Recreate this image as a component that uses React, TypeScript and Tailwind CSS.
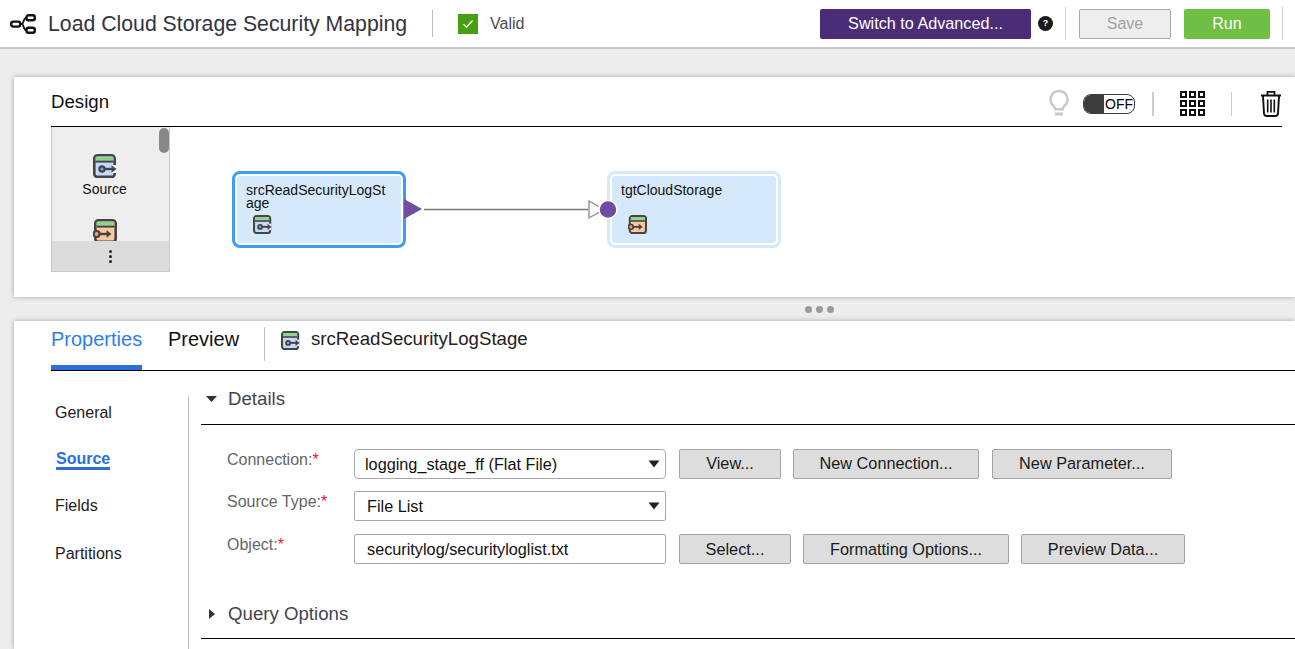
import React from "react";

function StageIcon({ kind, size = 24 }: { kind: "source" | "target"; size?: number }) {
  const body = kind === "source" ? "#c6daf8" : "#fcc6a3";
  return (
    <svg width={size} height={size} viewBox="0 0 24 24" className="block shrink-0">
      {kind === "source" ? (
        <g>
          <rect x="1.3" y="1.3" width="20.4" height="21.6" rx="3.2" fill={body} stroke="#444" strokeWidth="2.6" />
          <rect x="2.6" y="2.6" width="17.8" height="4" fill="#8ed48e" />
          <rect x="2.6" y="6.6" width="17.8" height="2" fill="#444" />
          <path d="M19 11v8h4v-8z" fill="#eef3fb" />
          <circle cx="9" cy="15" r="2.6" fill="#7fa6e8" stroke="#444" strokeWidth="2.2" />
          <path d="M11.5 15H20" stroke="#444" strokeWidth="2.4" />
          <path d="M18.5 11.2l5 3.8-5 3.8z" fill="#444" />
        </g>
      ) : (
        <g>
          <rect x="2.3" y="1.3" width="20.4" height="21.6" rx="3.2" fill={body} stroke="#444" strokeWidth="2.6" />
          <rect x="3.6" y="2.6" width="17.8" height="4" fill="#8ed48e" />
          <rect x="3.6" y="6.6" width="17.8" height="2" fill="#444" />
          <circle cx="3.6" cy="15" r="3" fill="#f3a468" stroke="#444" strokeWidth="2.2" />
          <path d="M6.5 15H15" stroke="#444" strokeWidth="2.4" />
          <path d="M13.5 11.2l5 3.8-5 3.8z" fill="#444" />
        </g>
      )}
    </svg>
  );
}

function FormButton({ w, top, children }: { w: string; top?: boolean; children: React.ReactNode }) {
  return (
    <button
      className={`h-[30px] ${w} ${top ? "pb-[2px]" : "pb-0"} rounded-[2px] border border-[#a3a3a3] bg-[#dddddd] text-[16.3px] text-[#1a1a1a]`}
    >
      {children}
    </button>
  );
}

function Required({ children }: { children: React.ReactNode }) {
  return (
    <div className="w-[127px] text-[16px] leading-[18px] text-[#666666]">
      {children}
      <span className="text-[#e8202a]">*</span>
    </div>
  );
}

function Caret() {
  return (
    <svg width="12" height="8" viewBox="0 0 12 8" className="block">
      <path d="M0.5 0.5H11.5L6 7.5z" fill="#222" />
    </svg>
  );
}

export default function App() {
  return (
    <div className="h-[649px] w-[1295px] overflow-hidden bg-[#ededed] font-['Liberation_Sans',Arial,sans-serif]">
      <header className="flex h-[49px] items-center border-b-2 border-[#c6c6c6] bg-white">
        <svg width="26" height="20" viewBox="0 0 26 20" className="ml-[10px] block">
          <rect x="1.2" y="7.6" width="9" height="5" rx="2" fill="none" stroke="#111" strokeWidth="2.4" />
          <rect x="16.5" y="1.2" width="8.3" height="5" rx="2" fill="none" stroke="#111" strokeWidth="2.4" />
          <rect x="16.5" y="13.8" width="8.3" height="5" rx="2" fill="none" stroke="#111" strokeWidth="2.4" />
          <path d="M10.5 10h1.5c1.5 0 1.5-6.3 4.5-6.3M12 10c1.5 0 1.5 6.3 4.5 6.3" fill="none" stroke="#111" strokeWidth="1.8" />
        </svg>
        <h1 className="ml-[12px] mt-[2px] w-[384px] whitespace-nowrap text-[21.25px] font-normal text-[#33333f]">
          Load Cloud Storage Security Mapping
        </h1>
        <div className="h-[27px] w-px bg-[#bdbdbd]" />
        <div className="ml-[25px] flex h-[20px] w-[20px] items-center justify-center bg-[#44a012]">
          <svg width="12" height="10" viewBox="0 0 12 10">
            <path d="M1.5 5.2l3 3L10.5 1.5" fill="none" stroke="#fff" strokeWidth="1.4" />
          </svg>
        </div>
        <span className="ml-[12px] w-[330px] text-[16px] text-[#4a4a55]">Valid</span>
        <button className="h-[30px] w-[211px] rounded-[2px] bg-[#4b2d77] text-[16.2px] text-white">
          Switch to Advanced...
        </button>
        <div className="ml-[7px] flex h-[15px] w-[15px] items-center justify-center rounded-full bg-[#1a1a1a] text-[9px] font-bold text-white">
          ?
        </div>
        <div className="ml-[12px] h-[33px] w-px bg-[#cfcfcf]" />
        <button className="ml-[13px] h-[30px] w-[92px] rounded-[2px] border border-[#a8a8a8] bg-[#eeeeee] text-[16px] text-[#a3a3a3]">
          Save
        </button>
        <button className="ml-[13px] h-[30px] w-[86px] rounded-[2px] bg-[#6fbf44] text-[16px] text-white">Run</button>
        <div className="ml-[12px] h-[33px] w-px bg-[#cfcfcf]" />
      </header>

      <section className="ml-[14px] mt-[28px] h-[220px] bg-white pl-[37px] pr-[13px] shadow-[0_0_5px_rgba(0,0,0,0.3)]">
        <div className="flex h-[50px] items-center border-b border-black pt-[4px]">
          <h2 className="mt-[-3px] flex-1 text-[18.67px] font-normal text-[#111111]">Design</h2>
          <svg width="22" height="28" viewBox="0 0 22 28" className="mt-[-2px] block">
            <path d="M11 2a8.5 8.5 0 0 0-5 15.3c.8.8 1.2 1.7 1.2 3h7.6c0-1.3.4-2.2 1.2-3A8.5 8.5 0 0 0 11 2z" fill="none" stroke="#c9c9c9" strokeWidth="2.4" />
            <path d="M7 25h8" stroke="#c9c9c9" strokeWidth="3" />
          </svg>
          <div className="ml-[13px] flex h-[20px] w-[52px] items-stretch overflow-hidden rounded-[8px] border border-[#3c3c3c]">
            <div className="w-[20px] bg-[#3c3c3c]" />
            <div className="flex-1 pl-[1px] text-[14px] leading-[18px] text-black">OFF</div>
          </div>
          <div className="ml-[17px] h-[24px] w-[2px] bg-[#cccccc]" />
          <div className="ml-[26px] grid w-[25px] grid-cols-3 gap-[2px]">
            {[0, 1, 2, 3, 4, 5, 6, 7, 8].map((i) => (
              <div key={i} className="h-[7px] w-[7px] border-2 border-[#111111]" />
            ))}
          </div>
          <div className="ml-[26px] h-[24px] w-px bg-[#cccccc]" />
          <svg width="22" height="27" viewBox="0 0 22 27" className="ml-[28px] block">
            <path d="M1 5.5h20M7.5 5V1.8h7V5" fill="none" stroke="#111" strokeWidth="1.8" />
            <path d="M3 6l1 17.5A2.5 2.5 0 0 0 6.5 26h9a2.5 2.5 0 0 0 2.5-2.5L19 6" fill="none" stroke="#111" strokeWidth="1.9" />
            <path d="M7.7 9.5v13M11 9.5v13M14.3 9.5v13" stroke="#111" strokeWidth="1.6" />
          </svg>
        </div>
        <div className="flex">
          <aside className="relative h-[145px] w-[119px] overflow-hidden border border-t-0 border-[#c8c8c8] bg-[#eeeeee]">
            <div className="absolute right-[0px] top-[1px] h-[25px] w-[10px] rounded-[5px] bg-[#888888]" />
            <div className="flex h-[114px] flex-col items-center overflow-hidden pr-[12px] pt-[27px]">
              <StageIcon kind="source" />
              <span className="mt-[3px] text-[14px] leading-[16px] text-[#111111]">Source</span>
              <div className="mt-[22px]">
                <StageIcon kind="target" />
              </div>
            </div>
            <div className="flex h-[30px] flex-col items-center justify-center gap-[2px] bg-[#dcdcdc]">
              <div className="h-[3px] w-[3px] rounded-full bg-[#222222]" />
              <div className="h-[3px] w-[3px] rounded-full bg-[#222222]" />
              <div className="h-[3px] w-[3px] rounded-full bg-[#222222]" />
            </div>
          </aside>
          <div className="relative flex-1">
            {/* free canvas: nodes and connector */}
            <div className="absolute left-[62px] top-[44px] h-[77px] w-[174px] rounded-[8px] border-[3px] border-[#3d9df6] bg-white p-[2px]">
              <div className="h-full rounded-[3px] bg-[#d6e9fb] px-[9px] pt-[8px] text-[14px] leading-[13px] text-[#111111]">
                <div className="w-[140px] break-all">srcReadSecurityLogStage</div>
                <div className="ml-[7px] mt-[5px]">
                  <StageIcon kind="source" size={19} />
                </div>
              </div>
            </div>
            <div className="absolute left-[437px] top-[44px] h-[77px] w-[174px] rounded-[8px] border-[3px] border-[#d6e9fb] bg-white p-[2px]">
              <div className="h-full rounded-[3px] bg-[#d6e9fb] px-[9px] pt-[6px] text-[14px] leading-[16px] text-[#111111]">
                <div>tgtCloudStorage</div>
                <div className="ml-[7px] mt-[17px]">
                  <StageIcon kind="target" size={19} />
                </div>
              </div>
            </div>
            <svg width="220" height="26" viewBox="0 0 220 26" className="absolute left-[230px] top-[72px] block">
              <path d="M4 0L22 10 4 20z" fill="#6e4ea3" />
              <path d="M24 10.5H188" stroke="#777" strokeWidth="1.3" />
              <path d="M189 2L204 10.5 189 19z" fill="#fff" stroke="#888" strokeWidth="1.3" />
              <circle cx="208" cy="10.5" r="9" fill="#6e4ea3" stroke="#fff" strokeWidth="1.5" />
            </svg>
          </div>
        </div>
      </section>

      <div className="flex h-[24px] items-center gap-[4px] pl-[805px] pt-[1px]">
        <div className="h-[7px] w-[7px] rounded-full bg-[#9b9b9b]" />
        <div className="h-[7px] w-[7px] rounded-full bg-[#9b9b9b]" />
        <div className="h-[7px] w-[7px] rounded-full bg-[#9b9b9b]" />
      </div>

      <section className="ml-[14px] h-[328px] bg-white pl-[37px] shadow-[0_0_5px_rgba(0,0,0,0.3)]">
        <div className="flex h-[50px] border-b border-black">
          <div className="h-[49px] w-[91px] border-b-[5px] border-[#2a6fdb] pt-[6px] text-[20px] leading-[24px] text-[#2f7ee8]">
            Properties
          </div>
          <div className="ml-[26px] w-[96px] pt-[6px] text-[20px] leading-[24px] text-[#111111]">Preview</div>
          <div className="mt-[6px] h-[34px] w-px bg-[#bdbdbd]" />
          <div className="ml-[16px] mt-[10px]">
            <StageIcon kind="source" size={19} />
          </div>
          <div className="ml-[11px] pt-[7px] text-[18.67px] leading-[22px] text-[#222222]">srcReadSecurityLogStage</div>
        </div>
        <div className="flex">
          <nav className="mt-[25px] h-[253px] w-[138px] border-r border-[#bdbdbd] pl-[4px] text-[16px] text-[#222222]">
            <div className="mt-[8px] leading-[18px]">General</div>
            <div className="mt-[28px] leading-[18px]">
              <span className="ml-[1px] inline-block border-b-[3px] border-[#2a6fdb] font-bold leading-[16px] text-[#2a6fdb]">
                Source
              </span>
            </div>
            <div className="mt-[27px] leading-[18px]">Fields</div>
            <div className="mt-[30px] leading-[18px]">Partitions</div>
          </nav>
          <div className="ml-[12px] flex-1">
            <div className="flex h-[54px] items-center border-b border-black pt-[2px]">
              <svg width="11" height="6" viewBox="0 0 11 6" className="ml-[5px] block">
                <path d="M0 0H11L5.5 6z" fill="#333" />
              </svg>
              <span className="ml-[11px] text-[18.67px] text-[#44444e]">Details</span>
            </div>
            <div className="ml-[26px] mt-[24px] flex flex-col">
              <div className="flex items-start">
                <div className="mt-[2px]">
                  <Required>Connection:</Required>
                </div>
                <div className="flex h-[30px] w-[312px] items-center rounded-[4px] border border-[#a8a8a8] pl-[10px] pr-[5px] text-[16.25px] text-[#111111]">
                  <span className="flex-1">logging_stage_ff (Flat File)</span>
                  <Caret />
                </div>
                <div className="ml-[13px] flex gap-[12px]">
                  <FormButton w="w-[102px]" top>View...</FormButton>
                  <FormButton w="w-[186px]" top>New Connection...</FormButton>
                  <div className="ml-[1px]">
                    <FormButton w="w-[180px]" top>New Parameter...</FormButton>
                  </div>
                </div>
              </div>
              <div className="mt-[12px] flex items-start">
                <div className="mt-[2px]">
                  <Required>Source Type:</Required>
                </div>
                <div className="flex h-[30px] w-[312px] items-center rounded-[2px] border border-[#a8a8a8] pl-[12px] pr-[5px] text-[16.25px] text-[#111111]">
                  <span className="mt-[1px] flex-1">File List</span>
                  <Caret />
                </div>
              </div>
              <div className="mt-[13px] flex items-start">
                <div className="mt-[2px]">
                  <Required>Object:</Required>
                </div>
                <div className="flex h-[30px] w-[312px] items-center rounded-[2px] border border-[#a8a8a8] pl-[12px] text-[16.25px] text-[#111111]">
                  securitylog/securityloglist.txt
                </div>
                <div className="ml-[13px] flex gap-[12px]">
                  <FormButton w="w-[112px]">Select...</FormButton>
                  <FormButton w="w-[206px]">Formatting Options...</FormButton>
                  <FormButton w="w-[164px]">Preview Data...</FormButton>
                </div>
              </div>
            </div>
            <div className="mt-[28px] flex h-[47px] items-center border-b border-black pb-[2px]">
              <svg width="6" height="10" viewBox="0 0 6 10" className="ml-[8px] block">
                <path d="M0 0V10L6 5z" fill="#333" />
              </svg>
              <span className="ml-[13px] text-[18.67px] text-[#44444e]">Query Options</span>
            </div>
          </div>
        </div>
      </section>
    </div>
  );
}
